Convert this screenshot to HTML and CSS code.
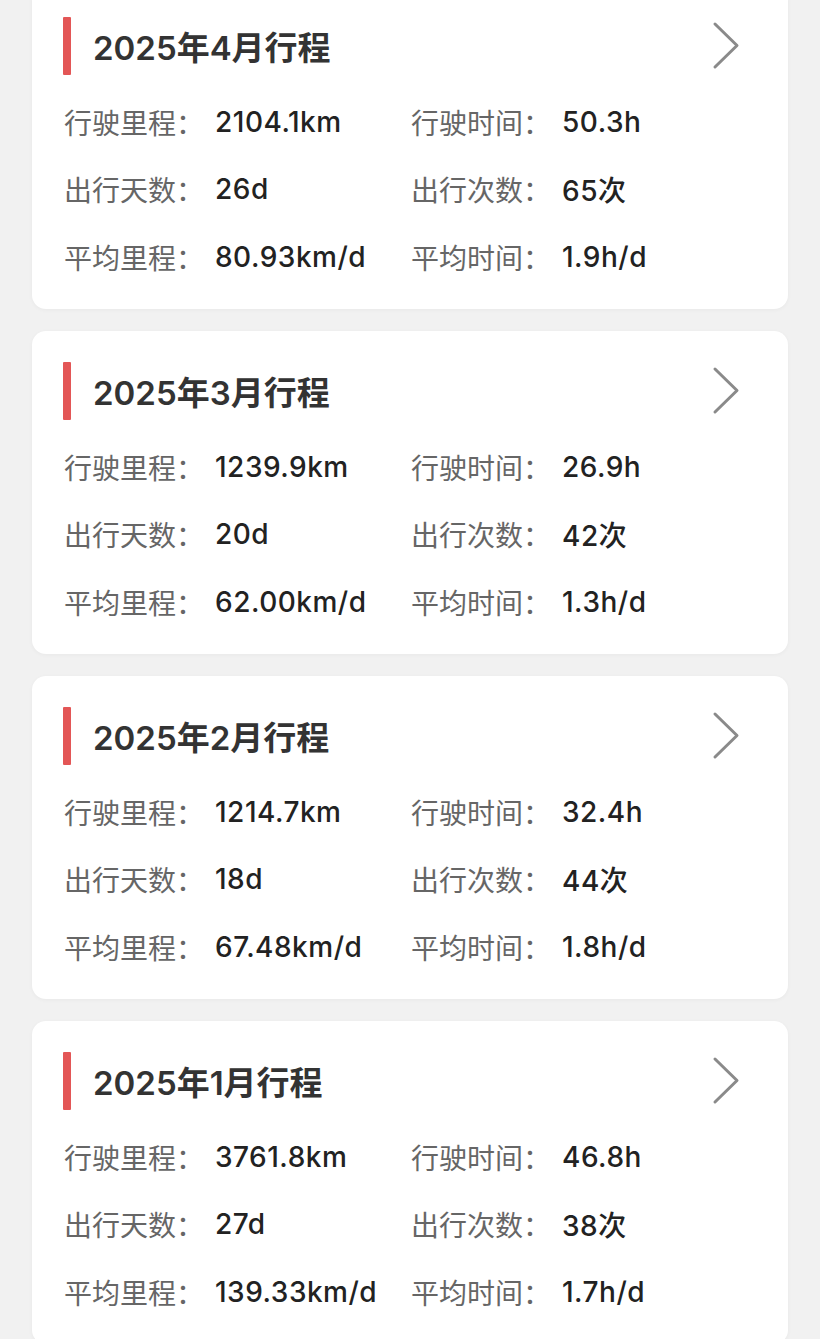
FILE: index.html
```html
<!DOCTYPE html>
<html lang="zh-CN">
<head>
  <meta charset="utf-8">
  <title>行程</title>
  <link rel="stylesheet" href="styles.css">
</head>
<body>
  <div id="trips">

    <div class="trip-card">
      <div class="trip-head">
        <span class="trip-bar"></span>
        <h2 class="trip-title">2025年4月行程</h2>
        <svg class="trip-arrow" width="28" height="49" viewBox="0 0 28 49"><polyline points="3,3 25,24.5 3,46" fill="none" stroke="#8a8a8a" stroke-width="3" stroke-linecap="round" stroke-linejoin="round"/></svg>
      </div>
      <div class="trip-stats">
        <div class="stat"><span class="stat-label">行驶里程：</span><span class="stat-value">2104.1km</span></div>
        <div class="stat"><span class="stat-label">行驶时间：</span><span class="stat-value">50.3h</span></div>
        <div class="stat"><span class="stat-label">出行天数：</span><span class="stat-value">26d</span></div>
        <div class="stat"><span class="stat-label">出行次数：</span><span class="stat-value">65次</span></div>
        <div class="stat"><span class="stat-label">平均里程：</span><span class="stat-value">80.93km/d</span></div>
        <div class="stat"><span class="stat-label">平均时间：</span><span class="stat-value">1.9h/d</span></div>
      </div>
    </div>

    <div class="trip-card">
      <div class="trip-head">
        <span class="trip-bar"></span>
        <h2 class="trip-title">2025年3月行程</h2>
        <svg class="trip-arrow" width="28" height="49" viewBox="0 0 28 49"><polyline points="3,3 25,24.5 3,46" fill="none" stroke="#8a8a8a" stroke-width="3" stroke-linecap="round" stroke-linejoin="round"/></svg>
      </div>
      <div class="trip-stats">
        <div class="stat"><span class="stat-label">行驶里程：</span><span class="stat-value">1239.9km</span></div>
        <div class="stat"><span class="stat-label">行驶时间：</span><span class="stat-value">26.9h</span></div>
        <div class="stat"><span class="stat-label">出行天数：</span><span class="stat-value">20d</span></div>
        <div class="stat"><span class="stat-label">出行次数：</span><span class="stat-value">42次</span></div>
        <div class="stat"><span class="stat-label">平均里程：</span><span class="stat-value">62.00km/d</span></div>
        <div class="stat"><span class="stat-label">平均时间：</span><span class="stat-value">1.3h/d</span></div>
      </div>
    </div>

    <div class="trip-card">
      <div class="trip-head">
        <span class="trip-bar"></span>
        <h2 class="trip-title">2025年2月行程</h2>
        <svg class="trip-arrow" width="28" height="49" viewBox="0 0 28 49"><polyline points="3,3 25,24.5 3,46" fill="none" stroke="#8a8a8a" stroke-width="3" stroke-linecap="round" stroke-linejoin="round"/></svg>
      </div>
      <div class="trip-stats">
        <div class="stat"><span class="stat-label">行驶里程：</span><span class="stat-value">1214.7km</span></div>
        <div class="stat"><span class="stat-label">行驶时间：</span><span class="stat-value">32.4h</span></div>
        <div class="stat"><span class="stat-label">出行天数：</span><span class="stat-value">18d</span></div>
        <div class="stat"><span class="stat-label">出行次数：</span><span class="stat-value">44次</span></div>
        <div class="stat"><span class="stat-label">平均里程：</span><span class="stat-value">67.48km/d</span></div>
        <div class="stat"><span class="stat-label">平均时间：</span><span class="stat-value">1.8h/d</span></div>
      </div>
    </div>

    <div class="trip-card">
      <div class="trip-head">
        <span class="trip-bar"></span>
        <h2 class="trip-title">2025年1月行程</h2>
        <svg class="trip-arrow" width="28" height="49" viewBox="0 0 28 49"><polyline points="3,3 25,24.5 3,46" fill="none" stroke="#8a8a8a" stroke-width="3" stroke-linecap="round" stroke-linejoin="round"/></svg>
      </div>
      <div class="trip-stats">
        <div class="stat"><span class="stat-label">行驶里程：</span><span class="stat-value">3761.8km</span></div>
        <div class="stat"><span class="stat-label">行驶时间：</span><span class="stat-value">46.8h</span></div>
        <div class="stat"><span class="stat-label">出行天数：</span><span class="stat-value">27d</span></div>
        <div class="stat"><span class="stat-label">出行次数：</span><span class="stat-value">38次</span></div>
        <div class="stat"><span class="stat-label">平均里程：</span><span class="stat-value">139.33km/d</span></div>
        <div class="stat"><span class="stat-label">平均时间：</span><span class="stat-value">1.7h/d</span></div>
      </div>
    </div>

  </div>
</body>
</html>
```

FILE: styles.css
```css
*, *:before, *:after { box-sizing: border-box; }
html, body { height: 100%; }
body {
  margin: 0;
  padding: 0;
  background-color: #f1f1f1;
  font-family: "Inter", "Noto Sans CJK SC", sans-serif;
  overflow: hidden;
}

#trips {
  display: flex;
  flex-direction: column;
  gap: 22px;
  padding: 0 32px;
  margin-top: -14px;
}

/* card */
.trip-card {
  background-color: #fff;
  border-radius: 14px;
  padding: 31px 32px 18px 31px;
  height: 323px;
  box-shadow: 0 1px 4px rgba(0, 0, 0, 0.04);
}

.trip-head {
  display: flex;
  align-items: center;
  height: 58px;
}
.trip-bar {
  width: 8px;
  height: 58px;
  background-color: #e35656;
  border-radius: 1px;
}
.trip-title {
  flex: 1;
  margin: 0 0 0 22px;
  font-size: 33px;
  font-weight: 600;
  color: #333;
}
.trip-arrow { margin-right: 16px; margin-top: -2px; }

/* stats grid */
.trip-stats {
  display: grid;
  grid-template-columns: 347px 1fr;
  grid-auto-rows: 67.5px;
  margin-top: 13px;
  padding-left: 1px;
}
.stat {
  display: flex;
  align-items: center;
  font-size: 28px;
}
.stat-label { width: 151px; color: #666; }
.stat-value { color: #222; font-weight: 500; letter-spacing: 0.5px; }
```
